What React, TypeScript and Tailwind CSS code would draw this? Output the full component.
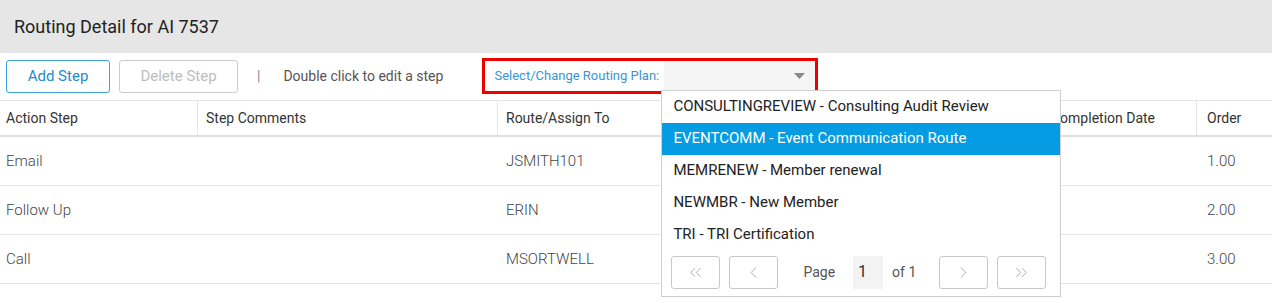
import { ChevronLeft, ChevronRight, ChevronsLeft, ChevronsRight } from 'lucide-react'

const COLUMNS = [
  { label: 'Action Step', w: 'w-[197px]' },
  { label: 'Step Comments', w: 'w-[300px]' },
  { label: 'Route/Assign To', w: 'w-[293px]' },
  { label: '', w: 'w-[252px]' },
  { label: 'Completion Date', w: 'w-[154px]' },
  { label: 'Order', w: 'flex-1' },
]

const ROWS = [
  { step: 'Email', route: 'JSMITH101', order: '1.00' },
  { step: 'Follow Up', route: 'ERIN', order: '2.00' },
  { step: 'Call', route: 'MSORTWELL', order: '3.00' },
]

const PLANS = [
  'CONSULTINGREVIEW - Consulting Audit Review',
  'EVENTCOMM - Event Communication Route',
  'MEMRENEW - Member renewal',
  'NEWMBR - New Member',
  'TRI - TRI Certification',
]

function PagerButton({ children, className = '' }: { children: React.ReactNode; className?: string }) {
  return (
    <button
      type="button"
      className={`flex h-[33px] w-[49px] items-center justify-center rounded-[3px] border border-[#c8c8c8] bg-white text-[#a9a9a9] ${className}`}
    >
      {children}
    </button>
  )
}

export default function App() {
  return (
    <div className="relative h-[303px] w-[1272px] overflow-hidden bg-white font-['Roboto',sans-serif] text-[#333]">
      <div className="flex h-[53px] items-center bg-[#e6e6e6] px-[14px] text-[18px] text-[#222]">
        Routing Detail for AI 7537
      </div>

      <div className="flex h-[47px] items-center pl-[6px]">
        <button
          type="button"
          className="h-[33px] w-[104px] rounded-[3px] border border-[#3aa3dd] bg-white text-[15px] text-[#1e8bd0]"
        >
          Add Step
        </button>
        <button
          type="button"
          className="ml-[9px] h-[33px] w-[119px] rounded-[3px] border border-[#cccccc] bg-white text-[15px] text-[#bdbdbd]"
        >
          Delete Step
        </button>
        <span className="ml-[19px] text-[14px] text-[#888]">|</span>
        <span className="ml-[23px] w-[199px] text-[14px] text-[#555]">Double click to edit a step</span>

        <div className="relative z-20 mt-[-2px] flex h-[36px] w-[336px] items-stretch border-[3px] border-[#ee0000] pl-[9px]">
          <span className="flex items-center pt-[1px] text-[13px] text-[#3a94d4]">Select/Change Routing Plan:</span>
          <div className="ml-[5px] flex flex-1 items-center justify-end bg-[#f5f5f5] pr-[10px]">
            <svg width="11" height="6" viewBox="0 0 11 6">
              <path d="M0 0h11L5.5 6z" fill="#8a8a8a" />
            </svg>
          </div>

          <div className="absolute left-[176px] top-[29px] z-10 w-[400px] border border-[#cfcfcf] bg-white text-[15px] text-[#222]">
            {PLANS.map((p, i) => (
              <div
                key={p}
                className={`flex h-[32px] items-center px-[11px] ${i === 1 ? 'bg-[#069ce3] text-white' : ''}`}
              >
                {p}
              </div>
            ))}
            <div className="flex h-[45px] items-start pl-[9px] pt-[5px] text-[14px] text-[#555]">
              <PagerButton className="w-[48px]">
                <ChevronsLeft size={19} strokeWidth={1.2} />
              </PagerButton>
              <PagerButton className="ml-[9px]">
                <ChevronLeft size={19} strokeWidth={1.2} />
              </PagerButton>
              <span className="ml-[25px] flex h-[33px] items-center">Page</span>
              <span className="ml-[18px] flex h-[33px] w-[30px] items-center bg-[#f3f3f3] pl-[5px] text-[16px] text-[#333]">1</span>
              <span className="ml-[9px] flex h-[33px] items-center">of 1</span>
              <PagerButton className="ml-[23px]">
                <ChevronRight size={19} strokeWidth={1.2} />
              </PagerButton>
              <PagerButton className="ml-[9px]">
                <ChevronsRight size={19} strokeWidth={1.2} />
              </PagerButton>
            </div>
          </div>
        </div>
      </div>

      <div className="flex h-[37px] border-b-2 border-t border-b-[#dedede] border-t-[#e5e5e5] text-[14px] text-[#333]">
        {COLUMNS.map((c, i) => (
          <div
            key={i}
            className={`flex items-center ${c.w} ${i === 0 ? 'pl-[6px]' : 'border-l border-[#e5e5e5] pl-[8px]'} ${i === 5 ? 'pl-[10px]' : ''}`}
          >
            {c.label}
          </div>
        ))}
      </div>

      {ROWS.map(r => (
        <div key={r.step} className="flex h-[49px] items-center border-b border-[#e5e5e5] text-[15px] font-light text-[#444]">
          <div className="w-[197px] pl-[6px]">{r.step}</div>
          <div className="w-[300px]" />
          <div className="w-[293px] pl-[9px]">{r.route}</div>
          <div className="w-[252px]" />
          <div className="w-[154px]" />
          <div className="flex-1 pl-[11px]">{r.order}</div>
        </div>
      ))}
    </div>
  )
}
